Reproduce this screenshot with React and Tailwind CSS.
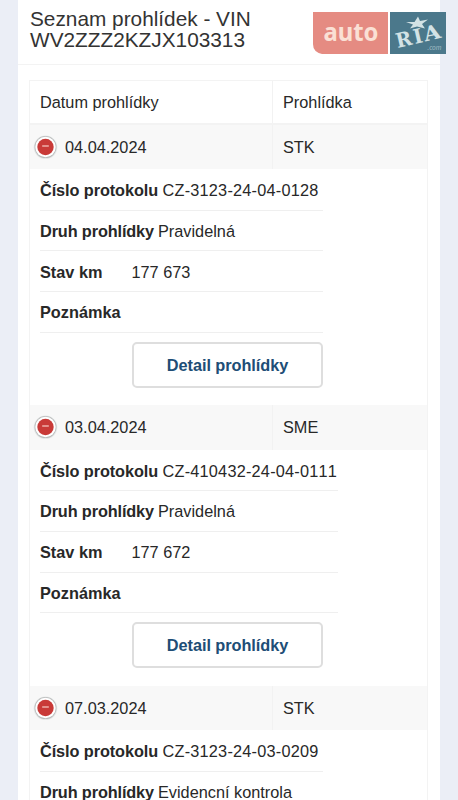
const inspections = [
  {
    date: "04.04.2024",
    type: "STK",
    protocol: "CZ-3123-24-04-0128",
    kind: "Pravidelná",
    mileage: "177 673",
    width: "w-[283px]",
  },
  {
    date: "03.04.2024",
    type: "SME",
    protocol: "CZ-410432-24-04-0111",
    kind: "Pravidelná",
    mileage: "177 672",
    width: "w-[297.5px]",
  },
  {
    date: "07.03.2024",
    type: "STK",
    protocol: "CZ-3123-24-03-0209",
    kind: "Evidencní kontrola",
    mileage: "",
    width: "w-[283px]",
  },
];

const Logo = () => (
  <svg
    width="133"
    height="42"
    viewBox="0 0 133 42"
    className="absolute left-[313px] top-3"
  >
    <path d="M0 0H75V42H9Q0 40 0 32Z" fill="#e58b82" />
    <text
      x="10.5"
      y="28.5"
      fontFamily="Noto Sans, Open Sans, sans-serif"
      fontSize="25"
      fontWeight="700"
      fill="#fae0d5"
      textLength="55"
      lengthAdjust="spacingAndGlyphs"
    >
      auto
    </text>
    <rect x="77" width="56" height="42" fill="#4b788b" />
    <path
      d="M93 10L101.5 10L105 4.5L107 9L115 7.5L109 12L112 16.5L104 14.5L97 16.5L100 12.5Z"
      fill="#d3e2e5"
    />
    <g
      transform="translate(84.5 36) rotate(-13)"
      fontFamily="DejaVu Serif, Liberation Serif, serif"
      fontWeight="700"
      fill="#d3e2e5"
    >
      <text
        fontSize="20"
        x="0"
        textLength="16"
        lengthAdjust="spacingAndGlyphs"
      >
        R
      </text>
      <text
        fontSize="20"
        x="18"
        textLength="9"
        lengthAdjust="spacingAndGlyphs"
      >
        I
      </text>
      <text
        fontSize="20"
        x="28.5"
        textLength="17"
        lengthAdjust="spacingAndGlyphs"
      >
        A
      </text>
    </g>
    <text
      x="114.5"
      y="38"
      fontFamily="Open Sans, sans-serif"
      fontSize="6.5"
      fontStyle="italic"
      fill="#a9c1ca"
    >
      .com
    </text>
  </svg>
);

const CollapseIcon = () => (
  <svg width="26" height="26" viewBox="0 0 26 26" className="block shrink-0">
    <circle cx="13.5" cy="13.3" r="11.8" fill="#e6e8e8" />
    <circle cx="13.5" cy="13.1" r="11" fill="#bbbdbd" />
    <circle cx="13.5" cy="13" r="10.2" fill="#fff" />
    <circle cx="13.5" cy="13" r="8.2" fill="#c93a38" />
    <path d="M10.2 12H16.8" stroke="#f3c3bd" strokeWidth="1.3" />
  </svg>
);

const DetailRow = ({ label, value, labelClass, valueClass = "" }) => (
  <div className="flex h-[40.75px] items-center whitespace-nowrap border-b border-[#efefef] pt-px">
    <span className={`shrink-0 font-bold ${labelClass}`}>{label}</span>
    <span className={valueClass}>{value}</span>
  </div>
);

const Inspection = ({ item }) => (
  <div className="h-[280.5px]">
    <div className="flex h-[44.5px] bg-[#f8f8f8]">
      <div className="flex w-[243px] items-center gap-[7px] border-r border-[#f2f2f2] pl-[2px]">
        <CollapseIcon />
        <span>{item.date}</span>
      </div>
      <div className="flex items-center pl-[10px]">{item.type}</div>
    </div>
    <div className="pl-[10px] pt-[0.75px]">
      <div className={item.width}>
        <DetailRow
          label="Číslo protokolu"
          value={item.protocol}
          labelClass="w-[122.5px] tracking-[-0.09px]"
          valueClass="tracking-[0.22px]"
        />
        <DetailRow
          label="Druh prohlídky"
          value={item.kind}
          labelClass="w-[118px] tracking-[-0.13px]"
        />
        <DetailRow
          label="Stav km"
          value={item.mileage}
          labelClass="w-[91.5px]"
        />
        <DetailRow label="Poznámka" labelClass="" />
      </div>
      <button
        type="button"
        className="ml-[92px] mt-[9px] block h-[46px] w-[191px] rounded-[5px] border-2 border-[#dedede] bg-white font-bold tracking-[-0.05px] text-[#204d76]"
      >
        Detail prohlídky
      </button>
    </div>
  </div>
);

const App = () => {
  return (
    <div className="relative h-[800px] overflow-hidden bg-[#ebeef6] pl-[18px] pr-[18px] font-['Liberation_Sans',Arial,sans-serif] text-[16.3px] leading-5 text-[#282828] [font-kerning:none]">
      <div className="h-full bg-white">
        <header className="h-[65px] border-b border-[#f3f3f3] pl-[12px] pt-[8px]">
          <h1 className="text-[20.8px] leading-[21px] text-[#333]">
            Seznam prohlídek - VIN
            <br />
            WV2ZZZ2KZJX103313
          </h1>
        </header>
        <main className="px-[11px] pt-[15px]">
          <div className="w-[399px] border border-[#f3f3f3]">
            <div className="flex h-[43.5px] border-b-2 border-[#f3f3f3]">
              <div className="flex w-[243px] items-center border-r border-[#f2f2f2] pl-[10px]">
                Datum prohlídky
              </div>
              <div className="flex items-center pl-[10px]">Prohlídka</div>
            </div>
            {inspections.map((item) => (
              <Inspection key={item.date} item={item} />
            ))}
          </div>
        </main>
      </div>
      <Logo />
    </div>
  );
};

export default App;
